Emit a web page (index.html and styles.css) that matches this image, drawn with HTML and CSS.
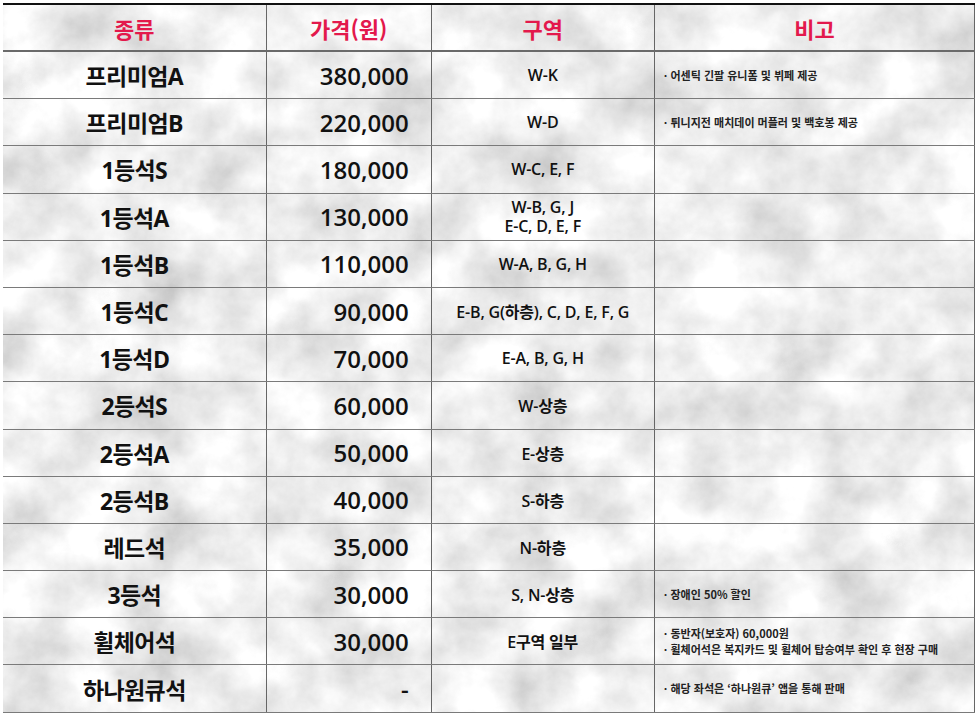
FILE: index.html
```html
<!DOCTYPE html>
<html lang="ko">
<head>
<meta charset="utf-8">
<link rel="stylesheet" href="styles.css">
</head>
<body>
<div class="wrap">
<table class="seats">
  <colgroup>
    <col class="c-type"><col class="c-price"><col class="c-zone"><col class="c-note">
  </colgroup>
  <thead>
    <tr><th>종류</th><th>가격(원)</th><th>구역</th><th>비고</th></tr>
  </thead>
  <tbody>
    <tr><td class="type">프리미엄A</td><td class="price">380,000</td><td class="zone">W-K</td><td class="note">· 어센틱 긴팔 유니폼 및 뷔페 제공</td></tr>
    <tr><td class="type">프리미엄B</td><td class="price">220,000</td><td class="zone">W-D</td><td class="note">· 튀니지전 매치데이 머플러 및 백호봉 제공</td></tr>
    <tr><td class="type">1등석S</td><td class="price">180,000</td><td class="zone">W-C, E, F</td><td class="note"></td></tr>
    <tr><td class="type">1등석A</td><td class="price">130,000</td><td class="zone"><span class="zl">W-B, G, J</span><span class="zl">E-C, D, E, F</span></td><td class="note"></td></tr>
    <tr><td class="type">1등석B</td><td class="price">110,000</td><td class="zone">W-A, B, G, H</td><td class="note"></td></tr>
    <tr><td class="type">1등석C</td><td class="price">90,000</td><td class="zone">E-B, G(하층), C, D, E, F, G</td><td class="note"></td></tr>
    <tr><td class="type">1등석D</td><td class="price">70,000</td><td class="zone">E-A, B, G, H</td><td class="note"></td></tr>
    <tr><td class="type">2등석S</td><td class="price">60,000</td><td class="zone">W-상층</td><td class="note"></td></tr>
    <tr><td class="type">2등석A</td><td class="price">50,000</td><td class="zone">E-상층</td><td class="note"></td></tr>
    <tr><td class="type">2등석B</td><td class="price">40,000</td><td class="zone">S-하층</td><td class="note"></td></tr>
    <tr><td class="type">레드석</td><td class="price">35,000</td><td class="zone">N-하층</td><td class="note"></td></tr>
    <tr><td class="type">3등석</td><td class="price">30,000</td><td class="zone">S, N-상층</td><td class="note">· 장애인 50% 할인</td></tr>
    <tr><td class="type">휠체어석</td><td class="price">30,000</td><td class="zone">E구역 일부</td><td class="note"><span class="nl">· 동반자(보호자) 60,000원</span><span class="nl">· 휠체어석은 복지카드 및 휠체어 탑승여부 확인 후 현장 구매</span></td></tr>
    <tr><td class="type">하나원큐석</td><td class="price">-</td><td class="zone"></td><td class="note">· 해당 좌석은 ‘하나원큐’ 앱을 통해 판매</td></tr>
  </tbody>
</table>
</div>
</body>
</html>
```

FILE: styles.css
```css
html, body {
  margin: 0;
  padding: 0;
  background: #ffffff;
}

.wrap {
  padding: 3px 0 0 3px;
}

.seats {
  width: 972px;
  table-layout: fixed;
  border-collapse: collapse;
  font-family: "Open Sans", "Noto Sans CJK KR", sans-serif;
  color: #111;
  background-color: #d8d8d8;
  background-image: url("data:image/svg+xml;utf8,<svg xmlns='http://www.w3.org/2000/svg' width='972' height='712'><filter id='n' x='0' y='0' width='100%25' height='100%25'><feTurbulence type='fractalNoise' baseFrequency='0.016' numOctaves='6' seed='11'/><feColorMatrix type='matrix' values='0.66 0 0 0 0.53  0.66 0 0 0 0.53  0.66 0 0 0 0.53  0 0 0 0 1'/></filter><rect width='100%25' height='100%25' filter='url(%23n)'/></svg>");
  background-size: 972px 712px;
  border-top: 2px solid #111;
  border-right: 1px solid #777;
  border-bottom: 1px solid #888;
}

.c-type { width: 263px; }
.c-price { width: 165px; }
.c-zone { width: 223px; }
.c-note { width: 320px; }

.seats th {
  height: 45px;
  padding: 0;
  color: #e3194c;
  font-family: "Noto Sans CJK KR", sans-serif;
  font-size: 22px;
  font-weight: 700;
  text-align: center;
  border-bottom: 2px solid #6a6a6a;
  border-right: 1px solid #666;
}

.seats td {
  height: 46.2px;
  padding: 0;
  border-bottom: 1px solid #7a7a7a;
  border-right: 1px solid #666;
  vertical-align: middle;
}

.seats td.type {
  text-align: center;
  font-size: 23px;
  font-weight: 700;
  letter-spacing: -0.6px;
}

.seats td.price {
  text-align: right;
  padding-right: 22px;
  font-size: 24px;
  font-weight: 600;
}

.seats td.zone {
  text-align: center;
  font-size: 16px;
  font-weight: 600;
  letter-spacing: -0.2px;
}

.zl {
  display: block;
  height: 19px;
  line-height: 19px;
  overflow: visible;
}

.seats td.note {
  text-align: left;
  padding-left: 9px;
  font-family: "Noto Sans CJK KR", sans-serif;
  font-size: 11px;
  font-weight: 700;
  line-height: 15px;
  color: #222;
}

.nl {
  display: block;
  height: 16px;
  line-height: 16px;
}
```
